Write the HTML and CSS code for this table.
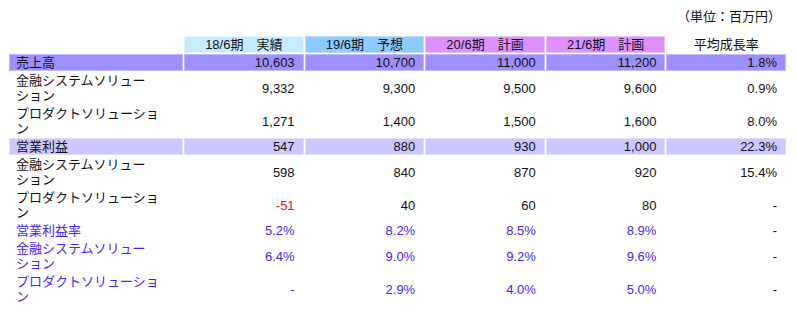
FILE: index.html
```html
<!DOCTYPE html>
<html lang="ja">
<head>
<meta charset="utf-8">
<link rel="stylesheet" href="styles.css">
</head>
<body>
<div class="unit">（単位：百万円）</div>
<table class="fin">
  <colgroup>
    <col class="c-label"><col><col><col><col><col>
  </colgroup>
  <thead>
    <tr class="h">
      <th class="lbl"></th>
      <th class="h-act">18/6期　実績</th>
      <th class="h-fc">19/6期　予想</th>
      <th class="h-plan">20/6期　計画</th>
      <th class="h-plan">21/6期　計画</th>
      <th class="h-avg">平均成長率</th>
    </tr>
  </thead>
  <tbody>
    <tr class="r1 main">
      <td class="lbl">売上高</td><td>10,603</td><td>10,700</td><td>11,000</td><td>11,200</td><td>1.8%</td>
    </tr>
    <tr class="r2">
      <td class="lbl">金融システムソリュー<br>ション</td><td>9,332</td><td>9,300</td><td>9,500</td><td>9,600</td><td>0.9%</td>
    </tr>
    <tr class="r2">
      <td class="lbl">プロダクトソリューショ<br>ン</td><td>1,271</td><td>1,400</td><td>1,500</td><td>1,600</td><td>8.0%</td>
    </tr>
    <tr class="r1 sub">
      <td class="lbl">営業利益</td><td>547</td><td>880</td><td>930</td><td>1,000</td><td>22.3%</td>
    </tr>
    <tr class="r2">
      <td class="lbl">金融システムソリュー<br>ション</td><td>598</td><td>840</td><td>870</td><td>920</td><td>15.4%</td>
    </tr>
    <tr class="r2">
      <td class="lbl">プロダクトソリューショ<br>ン</td><td class="neg">-51</td><td>40</td><td>60</td><td>80</td><td>-</td>
    </tr>
    <tr class="r1 blue">
      <td class="lbl">営業利益率</td><td>5.2%</td><td>8.2%</td><td>8.5%</td><td>8.9%</td><td class="plain">-</td>
    </tr>
    <tr class="r2 blue">
      <td class="lbl">金融システムソリュー<br>ション</td><td>6.4%</td><td>9.0%</td><td>9.2%</td><td>9.6%</td><td class="plain">-</td>
    </tr>
    <tr class="r2 blue">
      <td class="lbl">プロダクトソリューショ<br>ン</td><td>-</td><td>2.9%</td><td>4.0%</td><td>5.0%</td><td class="plain">-</td>
    </tr>
  </tbody>
</table>
</body>
</html>
```

FILE: styles.css
```css
body {
  margin: 8px;
  background: #fff;
  color: #111;
  font-family: "Liberation Sans", "Noto Sans CJK JP", sans-serif;
  font-size: 13px;
}

.unit {
  width: 779px;
  box-sizing: border-box;
  text-align: right;
  padding-right: 6px;
  line-height: 17px;
  height: 17px;
  margin-bottom: 10px;
}

.fin {
  width: 779px;
  table-layout: fixed;
  border-collapse: separate;
  border-spacing: 1px;
  margin: 0;
}

.c-label { width: 174px; }

.fin th,
.fin td {
  box-sizing: border-box;
  border: 1px solid transparent;
  padding: 0 8px 0 6px;
  line-height: 15px;
  font-weight: normal;
  text-align: right;
  vertical-align: middle;
  white-space: nowrap;
}

.fin .lbl { text-align: left; }

.fin tr.h th { height: 17px; text-align: center; padding: 0; }
.fin tr.r1 td { height: 17px; }
.fin tr.r2 td { height: 31px; }

.h-act { background: #c6ebff; border-color: #e4f6ff !important; }
.h-fc { background: #8ccaff; border-color: #b8deff !important; }
.h-plan { background: #dc91ff; border-color: #ecc2ff !important; }

.main td { background: #9d90fd; border-color: #c2b9ff !important; }
.sub td { background: #ccc8ff; border-color: #e1deff !important; }

.neg { color: #f41010; }
.blue td { color: #3f25ff; }
.blue td.plain { color: #111; }
```
